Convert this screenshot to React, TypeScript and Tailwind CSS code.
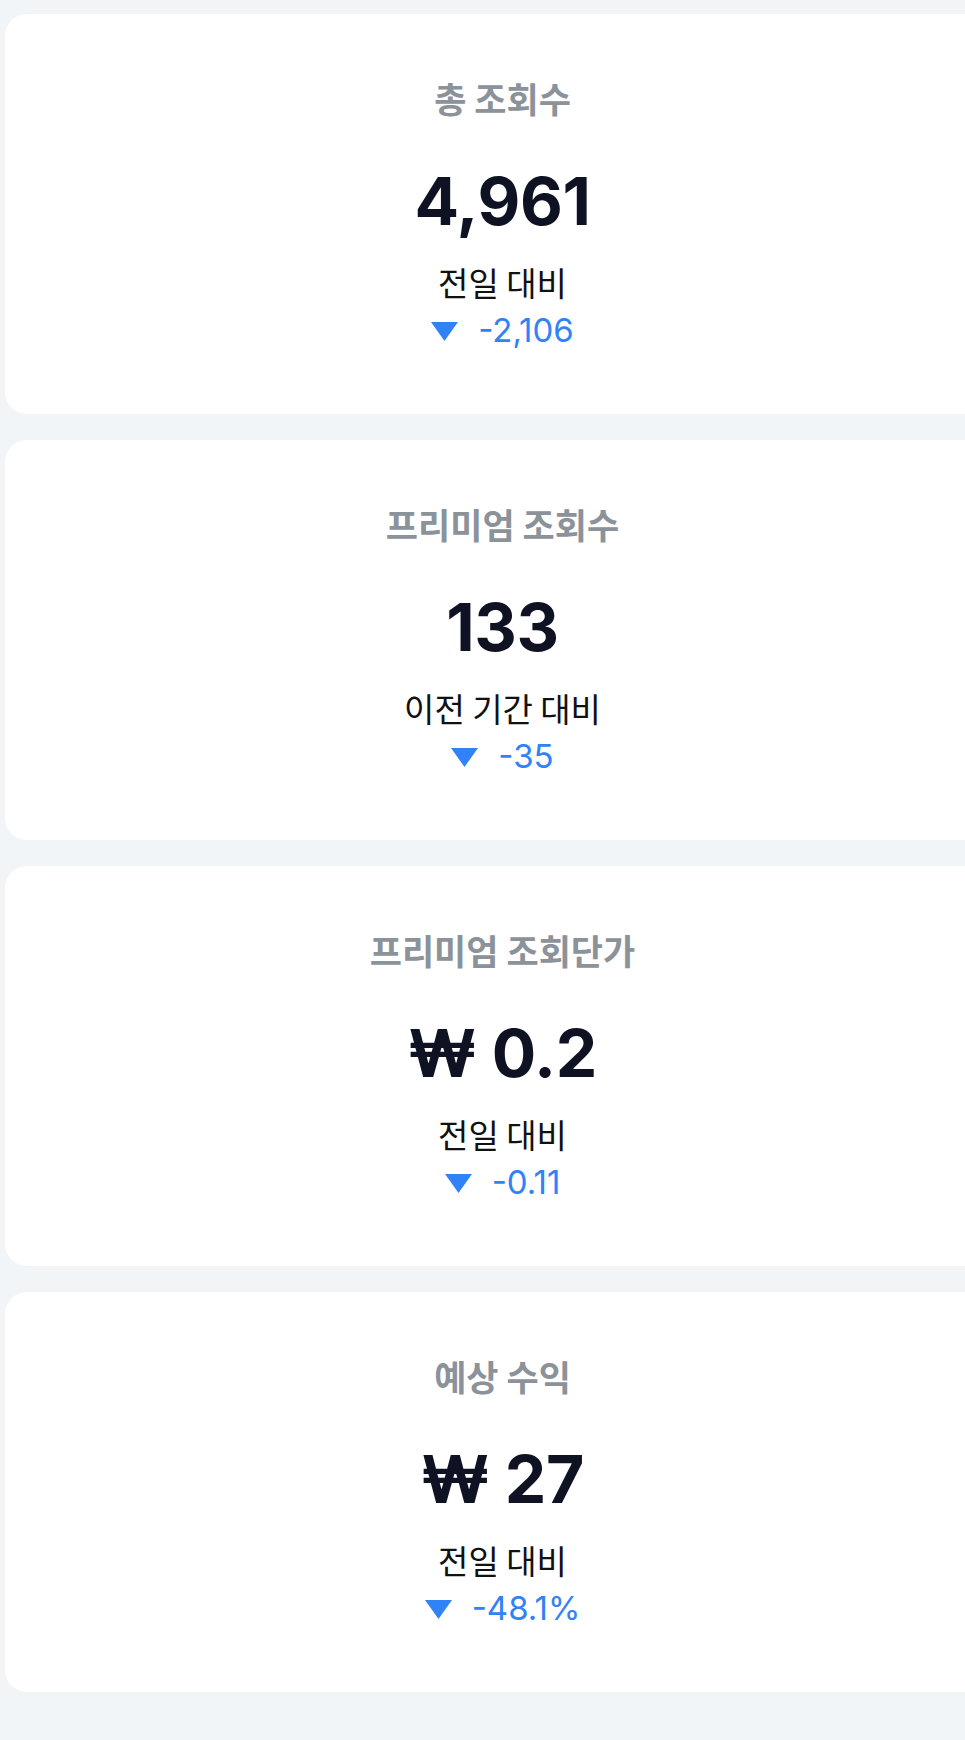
import React from "react";

const stats = [
  { title: "총 조회수", value: "4,961", label: "전일 대비", change: "-2,106" },
  { title: "프리미엄 조회수", value: "133", label: "이전 기간 대비", change: "-35" },
  { title: "프리미엄 조회단가", value: "₩ 0.2", label: "전일 대비", change: "-0.11" },
  { title: "예상 수익", value: "₩ 27", label: "전일 대비", change: "-48.1%" },
];

const kr = { fontFamily: '"Noto Sans CJK KR", "Noto Sans", sans-serif' };
const num = { fontFamily: 'Inter, "Noto Sans CJK KR", sans-serif' };

function StatCard({ title, value, label, change }: (typeof stats)[number]) {
  return (
    <div className="ml-[5px] w-[995px] shrink-0 rounded-[22px] bg-white pt-[58px] pb-[64px] flex flex-col items-center">
      <p style={kr} className="text-[35px] leading-[52px] font-bold text-[#8b9299]">
        {title}
      </p>
      <p style={num} className="mt-[37px] text-[66px] leading-[80px] font-bold tracking-[-0.005em] text-[#0f1222]">
        {value}
      </p>
      <p style={kr} className="mt-[17px] text-[33px] leading-[48px] text-[#111111]">
        {label}
      </p>
      <div className="mt-[4px] flex items-center gap-[20px] h-[40px]">
        <svg width="27" height="19" viewBox="0 0 27 19" className="mt-[2px]">
          <path d="M0 0H27L13.5 19Z" fill="#3182f6" />
        </svg>
        <span style={num} className="text-[33px] leading-[40px] text-[#3182f6]">
          {change}
        </span>
      </div>
    </div>
  );
}

export default function App() {
  return (
    <div className="min-h-screen w-full overflow-hidden bg-[#f2f5f8] pt-[14px] pb-[48px]">
      <div className="flex flex-col gap-[26px]">
        {stats.map((s, i) => (
          <StatCard key={i} {...s} />
        ))}
      </div>
    </div>
  );
}
